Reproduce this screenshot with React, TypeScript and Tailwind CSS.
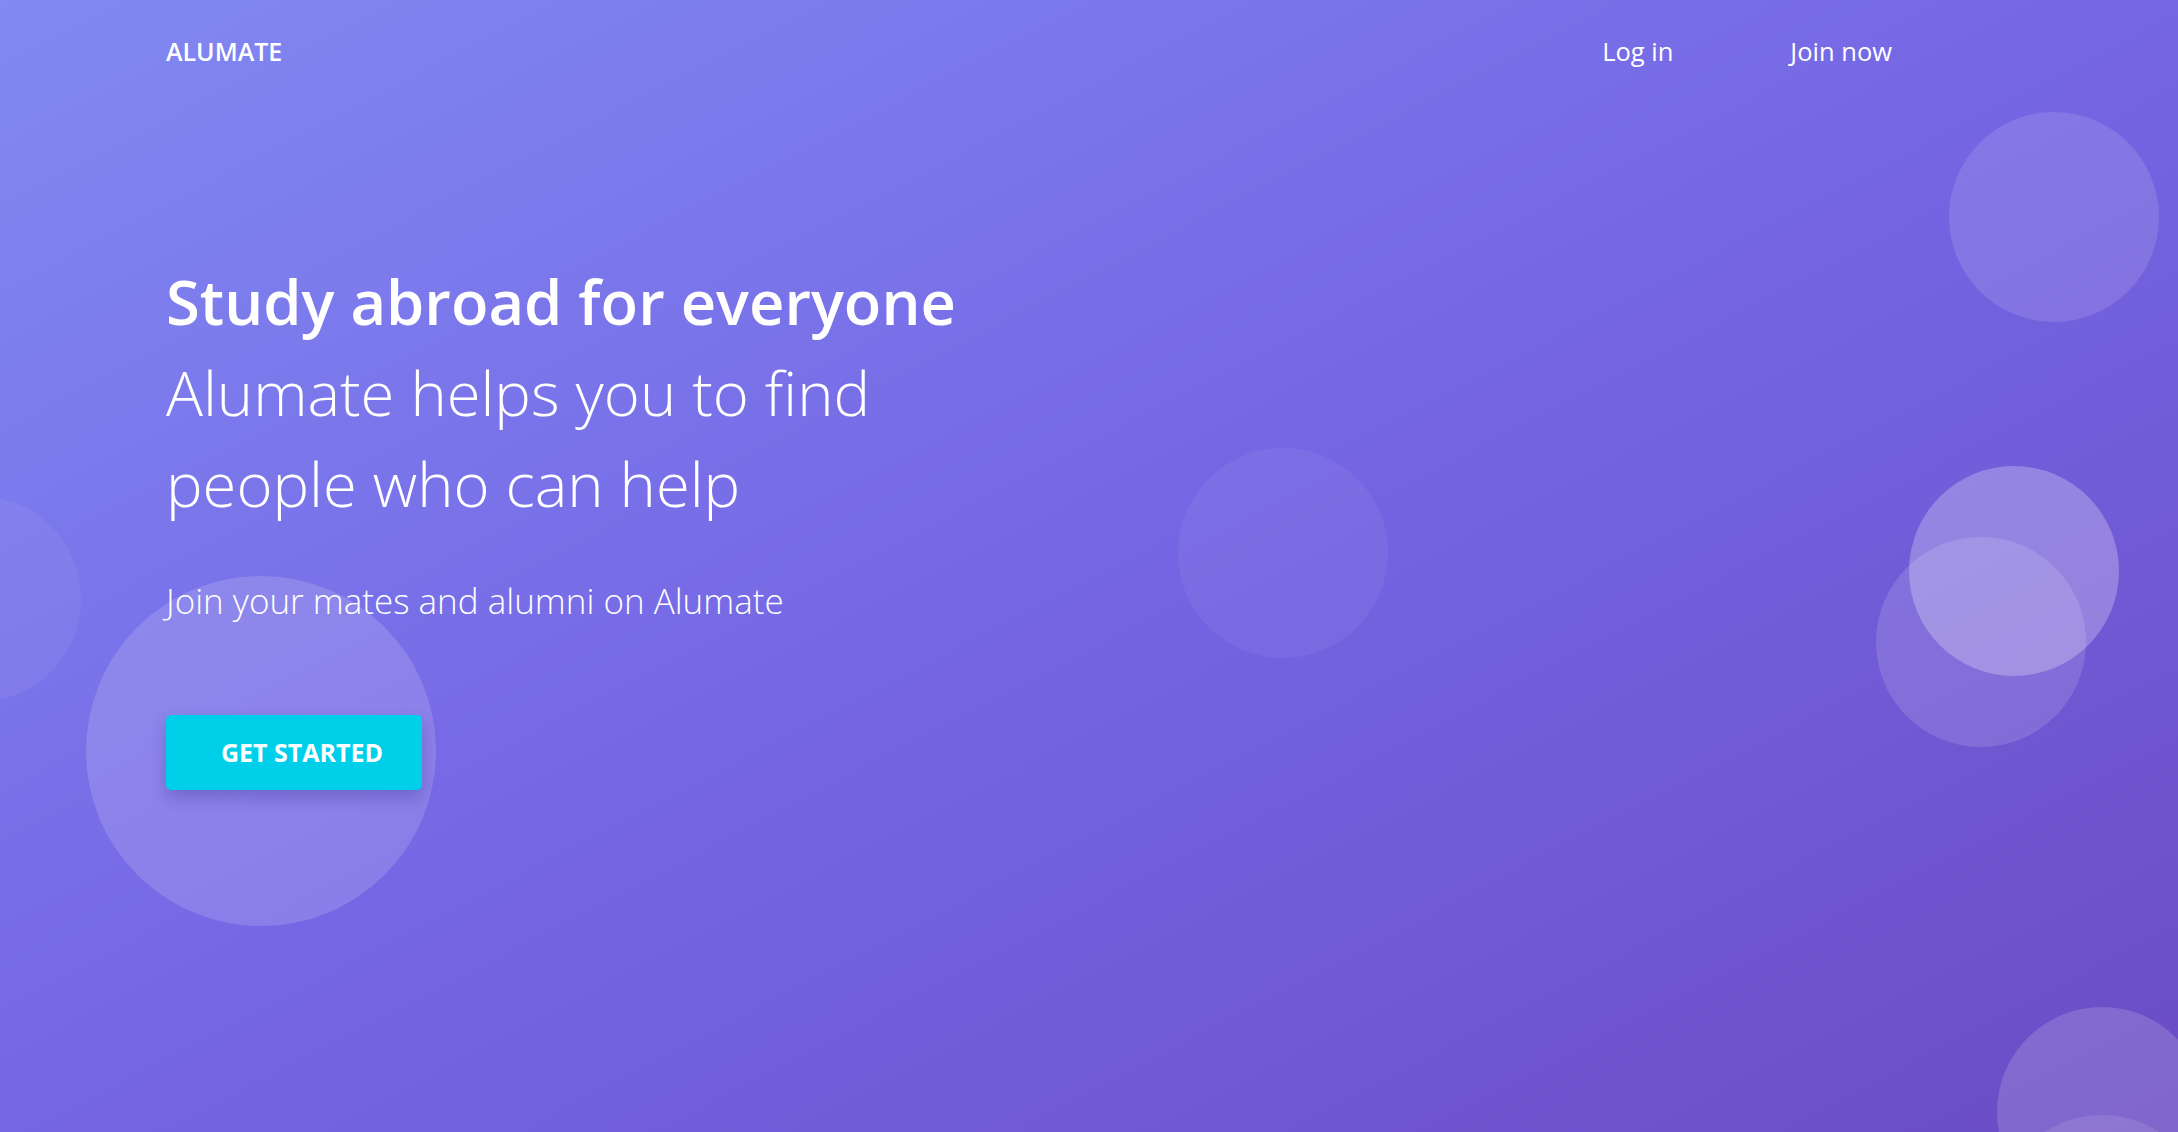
const circles = [
  { x: 2054, y: 217, r: 105, cls: 'bg-white/[0.12]' },
  { x: 2014, y: 571, r: 105, cls: 'bg-white/25' },
  { x: 1981, y: 642, r: 105, cls: 'bg-white/[0.13]' },
  { x: 1283, y: 553, r: 105, cls: 'bg-white/[0.05]' },
  { x: 261, y: 751, r: 175, cls: 'bg-white/15' },
  { x: -22, y: 599, r: 103, cls: 'bg-white/[0.05]' },
  { x: 2102, y: 1112, r: 105, cls: 'bg-white/15' },
  { x: 2102, y: 1220, r: 105, cls: 'bg-white/10' },
]

const Bubbles = () => (
  <div className="pointer-events-none absolute inset-0">
    {circles.map((c, i) => (
      <div
        key={i}
        className={`absolute rounded-full ${c.cls}`}
        style={{ left: c.x - c.r, top: c.y - c.r, width: c.r * 2, height: c.r * 2 }}
      />
    ))}
  </div>
)

export default function App() {
  return (
    <div className="relative h-[1132px] w-full overflow-hidden bg-linear-to-br from-[#8189f2] via-[#7566e4] to-[#6a4cc4] font-['Open_Sans',sans-serif] text-white">
      <Bubbles />

      <div className="relative z-10 pl-[166px] pr-[286px]">
        <nav className="flex items-center justify-between pt-[32px]">
          <span className="text-[25px] leading-[39px] font-semibold">ALUMATE</span>
          <div className="flex items-center gap-[117px] text-[25.5px] leading-[39px]">
            <a href="#" className="hover:underline">Log in</a>
            <a href="#" className="hover:underline">Join now</a>
          </div>
        </nav>

        <section className="mt-[185px]">
          <h1 className="text-[61.5px] leading-[91px]">
            <span className="block font-semibold">Study abroad for everyone</span>
            <span className="block font-light">
              Alumate helps you to find
              <br />
              people who can help
            </span>
          </h1>
          <p className="mt-[46px] text-[35px] leading-[52px] font-light">Join your mates and alumni on Alumate</p>

          <button className="mt-[88px] flex h-[75px] w-[256px] items-center rounded-[5px] bg-[#00cfea] pl-[55px] text-[25px] font-bold text-white shadow-[0_8px_16px_rgba(40,20,120,0.25)]">
            GET STARTED
          </button>
        </section>
      </div>
    </div>
  )
}
